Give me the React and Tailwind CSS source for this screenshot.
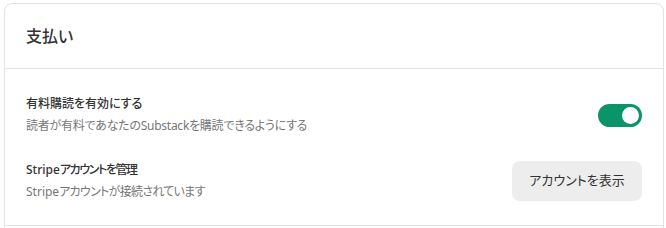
export default function App() {
  return (
    <div
      className="w-[666px] h-[228px] overflow-hidden bg-white pt-[3px] pl-[4px] pr-[2px] [font-feature-settings:'palt']"
      style={{ fontFamily: '"Noto Sans", "Noto Sans CJK JP", sans-serif' }}
    >
      <div className="rounded-t-[8px] border border-[#e3e3e3] h-[300px]">
        <div className="h-[65px] flex items-center px-[21px] border-b border-[#e3e3e3]">
          <h2 className="text-[16px] font-medium text-[#333]">支払い</h2>
        </div>
        <div className="px-[21px] border-b border-[#e3e3e3]">
          <div className="flex items-center justify-between pt-[24px]">
            <div className="flex flex-col">
              <span className="text-[12px] leading-[22px] text-[#333] font-medium">有料購読を有効にする</span>
              <span className="text-[12px] leading-[22px] text-[#777] tracking-[-0.25px]">読者が有料であなたのSubstackを購読できるようにする</span>
            </div>
            <button className="w-[44px] h-[23px] rounded-full bg-[#0a9467] flex items-center justify-end pr-[3px]">
              <span className="w-[17px] h-[17px] rounded-full bg-white" />
            </button>
          </div>
          <div className="flex items-center justify-between pt-[22px] pb-[22px]">
            <div className="flex flex-col">
              <span className="text-[12px] leading-[22px] text-[#333] font-medium">
                Stripe<span className="tracking-[-1.4px]">アカウントを管理</span>
              </span>
              <span className="text-[12px] leading-[22px] text-[#777]">
                Stripe<span className="tracking-[-0.7px]">アカウントが接続されています</span>
              </span>
            </div>
            <button className="w-[130px] h-[40px] rounded-[8px] bg-[#ededed] text-[13px] text-[#333]">
              アカウントを表示
            </button>
          </div>
        </div>
      </div>
    </div>
  );
}
